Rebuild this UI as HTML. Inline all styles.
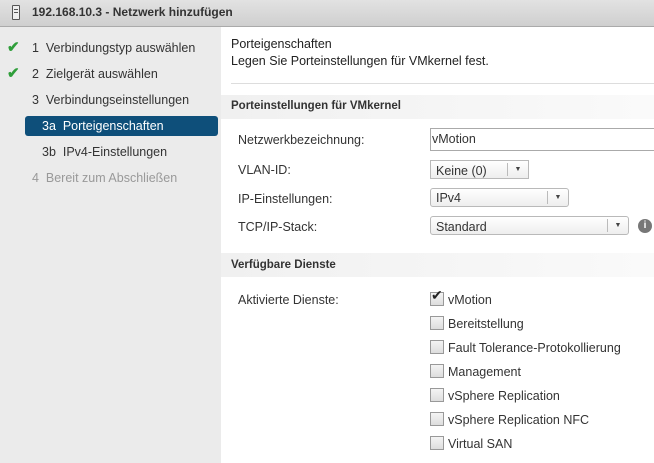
<!DOCTYPE html>
<html><head><style>
*{margin:0;padding:0;box-sizing:border-box}
body{width:654px;height:463px;overflow:hidden;font-family:"Liberation Sans",sans-serif;font-size:12.5px;color:#333;background:#fff;position:relative}
.a{position:absolute;white-space:nowrap}
#hd{left:0;top:0;width:654px;height:27px;background:linear-gradient(#e2e2e2,#cfcfcf);border-bottom:1px solid #aaa}
#sb{left:0;top:27px;width:221px;height:436px;background:#ebebeb}
.chk{color:#2f9e3a;font-size:15px;font-weight:bold}
.sec{left:221px;width:433px;height:24px;background:linear-gradient(90deg,#f0f0f0,#fafafa);}
.sel{height:19px;border:1px solid #b9b9b9;border-radius:3px;background:linear-gradient(#fff,#eee)}
.arr{position:absolute;top:2px;bottom:2px;border-left:1px solid #bbb;width:21px;text-align:center;font-size:7px;line-height:14px;color:#444}
.cb{width:14px;height:14px;border:1px solid #999;background:linear-gradient(#f4f4f4,#ddd)}
</style></head><body>
<div class="a" id="hd"></div>
<div class="a" style="left:12px;top:5px;width:8px;height:15px;border:1px solid #555;border-radius:1px;background:#eee"></div>
<div class="a" style="left:14px;top:9px;width:4px;height:1px;background:#555"></div>
<div class="a" style="left:14px;top:12px;width:4px;height:1px;background:#555"></div>
<div class="a" style="left:32px;top:5px;font-size:12px;font-weight:bold;color:#333">192.168.10.3 - Netzwerk hinzufügen</div>
<div class="a" id="sb"></div>
<div class="a chk" style="left:7px;top:38px">✔</div>
<div class="a" style="left:32px;top:41px">1&nbsp; Verbindungstyp auswählen</div>
<div class="a chk" style="left:7px;top:64px">✔</div>
<div class="a" style="left:32px;top:67px">2&nbsp; Zielgerät auswählen</div>
<div class="a" style="left:32px;top:93px">3&nbsp; Verbindungseinstellungen</div>
<div class="a" style="left:25px;top:116px;width:193px;height:20px;background:#0e4f7a;border-radius:3px"></div>
<div class="a" style="left:42px;top:119px;color:#fff">3a&nbsp; Porteigenschaften</div>
<div class="a" style="left:42px;top:145px">3b&nbsp; IPv4-Einstellungen</div>
<div class="a" style="left:32px;top:171px;color:#999">4&nbsp; Bereit zum Abschließen</div>

<div class="a" style="left:231px;top:37px;color:#222">Porteigenschaften</div>
<div class="a" style="left:231px;top:54px;color:#222">Legen Sie Porteinstellungen für VMkernel fest.</div>
<div class="a" style="left:231px;top:83px;width:423px;height:1px;background:#ddd"></div>
<div class="a sec" style="top:95px"></div>
<div class="a" style="left:231px;top:100px;font-weight:bold;font-size:11.5px">Porteinstellungen für VMkernel</div>
<div class="a" style="left:238px;top:133px">Netzwerkbezeichnung:</div>
<div class="a" style="left:430px;top:128px;width:230px;height:23px;border:1px solid #aaa;padding:3px 0 0 1px">vMotion</div>
<div class="a" style="left:238px;top:163px">VLAN-ID:</div>
<div class="a sel" style="left:430px;top:160px;width:99px;border-radius:0;padding:3px 5px">Keine (0)<div class="arr" style="left:76px">▼</div></div>
<div class="a" style="left:238px;top:192px">IP-Einstellungen:</div>
<div class="a sel" style="left:430px;top:188px;width:139px;padding:2px 5px">IPv4<div class="arr" style="left:116px">▼</div></div>
<div class="a" style="left:238px;top:220px">TCP/IP-Stack:</div>
<div class="a sel" style="left:430px;top:216px;width:199px;padding:3px 5px">Standard<div class="arr" style="left:176px">▼</div></div>
<div class="a" style="left:638px;top:219px;width:14px;height:14px;border-radius:50%;background:#777;color:#fff;font-size:10px;font-weight:bold;text-align:center;line-height:14px">i</div>
<div class="a sec" style="top:253px"></div>
<div class="a" style="left:231px;top:259px;font-weight:bold;font-size:11.5px">Verfügbare Dienste</div>
<div class="a" style="left:238px;top:293px">Aktivierte Dienste:</div>

<div class="a cb" style="left:430px;top:292px"></div>
<div class="a" style="left:431px;top:287px;font-size:14px;color:#222">✔</div>
<div class="a" style="left:448px;top:293px">vMotion</div>
<div class="a cb" style="left:430px;top:316px"></div><div class="a" style="left:448px;top:317px">Bereitstellung</div>
<div class="a cb" style="left:430px;top:340px"></div><div class="a" style="left:448px;top:341px">Fault Tolerance-Protokollierung</div>
<div class="a cb" style="left:430px;top:364px"></div><div class="a" style="left:448px;top:365px">Management</div>
<div class="a cb" style="left:430px;top:388px"></div><div class="a" style="left:448px;top:389px">vSphere Replication</div>
<div class="a cb" style="left:430px;top:412px"></div><div class="a" style="left:448px;top:413px">vSphere Replication NFC</div>
<div class="a cb" style="left:430px;top:436px"></div><div class="a" style="left:448px;top:437px">Virtual SAN</div>
</body></html>
